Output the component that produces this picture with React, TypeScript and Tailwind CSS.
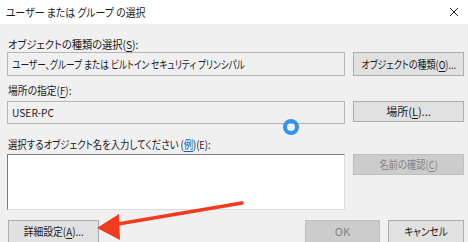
import React from "react";

const font = {
  fontFamily: '"Noto Sans CJK JP", "Noto Sans", sans-serif',
  fontFeatureSettings: '"palt"',
};

// narrow the CJK glyphs a little so they take the width of the Windows UI font
function T({ s, children }: { s: string; children: React.ReactNode }) {
  return <span className={"inline-block whitespace-nowrap " + s}>{children}</span>;
}

function Btn({ children, disabled, className }: { children: React.ReactNode; disabled?: boolean; className?: string }) {
  return (
    <div
      className={
        "flex items-center justify-center whitespace-nowrap border text-[11px] leading-none " +
        (disabled
          ? "bg-[#cccccc] border-[#bfbfbf] text-[#838383] "
          : "bg-[#e1e1e1] border-[#adadad] text-[#1a1a1a] ") +
        (className ?? "")
      }
    >
      {children}
    </div>
  );
}

function Key({ k }: { k: string }) {
  return (
    <>
      (<span className="underline underline-offset-2">{k}</span>)
    </>
  );
}

export default function App() {
  return (
    <div className="relative w-[468px] h-[242px] overflow-hidden bg-[#f0f0f0] text-[#1a1a1a]" style={font}>
      <div className="flex h-[24px] items-center justify-between bg-white pl-[6px] pr-[3px]">
        <T s="origin-left scale-x-[0.9] text-[11px]">ユーザー または グループ の選択</T>
        <svg width="16" height="16" viewBox="0 0 16 16" className="mr-[3px]">
          <path d="M4 4 L12 12 M12 4 L4 12" stroke="#222" strokeWidth="1" />
        </svg>
      </div>

      <div className="flex flex-col pl-[7px] pr-[4px] text-[11px]">
        <div className="mt-[12px] flex h-[16px] items-center pl-[1px]">
          <T s="origin-left scale-x-[0.93]">
            オブジェクトの種類の選択<Key k="S" />:
          </T>
        </div>
        <div className="flex h-[24px] gap-[8px]">
          <div className="flex w-[338px] items-center overflow-hidden border border-[#b4b4b4] bg-[#f0f0f0] pl-[4px]">
            <T s="origin-left scale-x-[0.79]">ユーザー、グループ または ビルトイン セキュリティ プリンシパル</T>
          </div>
          <Btn className="w-[111px]">
            <T s="origin-center scale-x-[0.82]">
              オブジェクトの種類<Key k="O" />...
            </T>
          </Btn>
        </div>

        <div className="mt-[6px] flex h-[16px] items-center pl-[1px]">
          <T s="origin-left scale-x-[0.89]">
            場所の指定<Key k="F" />:
          </T>
        </div>
        <div className="mt-[3px] flex h-[23px] gap-[8px]">
          <div className="flex w-[338px] items-center border border-[#b4b4b4] bg-[#f0f0f0] pl-[4px]">
            <T s="origin-left scale-x-[0.93]">USER-PC</T>
          </div>
          <Btn className="w-[111px] h-[21px]">
            場所<Key k="L" />...
          </Btn>
        </div>

        <div className="mt-[12px] flex h-[16px] items-center pl-[1px]">
          <T s="origin-left scale-x-[0.85]">
            選択するオブジェクト名を入力してください (<span className="text-[#0066cc] underline underline-offset-2">例</span>)(E):
          </T>
        </div>
        <div className="mt-[2px] flex h-[56px] gap-[8px]">
          <div className="w-[338px] border border-[#7a7a7a] border-b-[#dcdcdc] border-r-[#dcdcdc] bg-white" />
          <Btn disabled className="w-[111px] h-[21px]">
            <T s="origin-center scale-x-[0.85]">
              名前の確認<Key k="C" />
            </T>
          </Btn>
        </div>

        <div className="mt-[10px] flex h-[23px] items-stretch">
          <Btn className="ml-[1px] w-[91px]">
            <T s="origin-center scale-x-[0.89]">
              詳細設定<Key k="A" />...
            </T>
          </Btn>
          <div className="flex-1" />
          <Btn disabled className="w-[75px]">
            OK
          </Btn>
          <Btn className="ml-[8px] w-[76px]">
            <T s="origin-center scale-x-[0.87]">キャンセル</T>
          </Btn>
        </div>
      </div>

      {/* busy cursor */}
      <div className="absolute left-[283px] top-[119px] h-[16px] w-[16px] rounded-full border-[4px] border-[#2f94ee]" />

      {/* annotation arrow */}
      <svg className="absolute left-0 top-0" width="468" height="242" viewBox="0 0 468 242">
        <line x1="242" y1="203" x2="112" y2="225" stroke="#f43a1c" strokeWidth="3.5" strokeLinecap="round" />
        <polygon points="97,228 119,214 120,240" fill="#f43a1c" />
      </svg>
    </div>
  );
}
